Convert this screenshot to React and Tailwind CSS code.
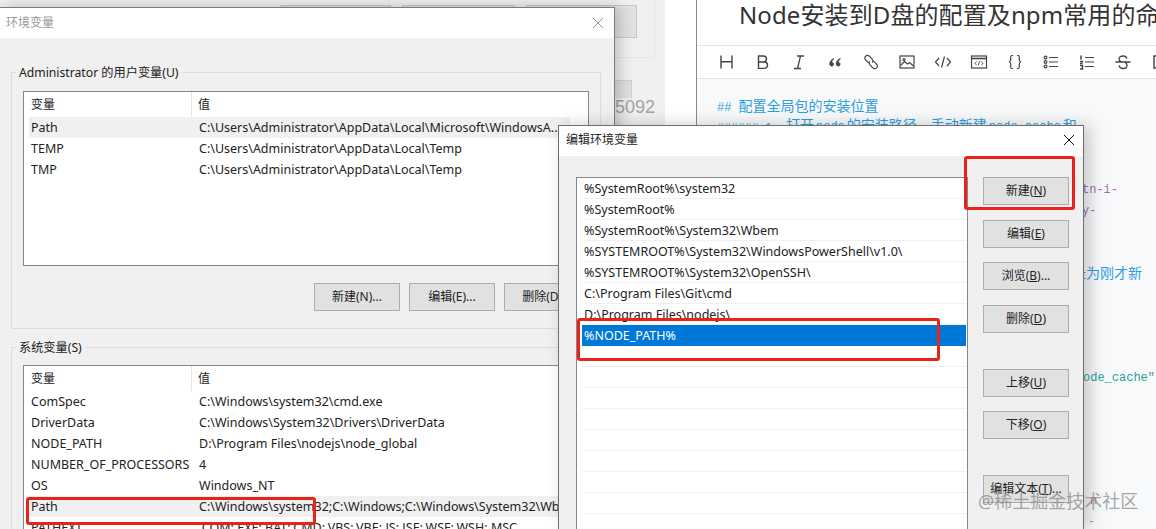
import React from "react";

const uiFont = "font-['Noto_Sans','Noto_Sans_CJK_SC',sans-serif]";

const userVars = [
  ["Path", "C:\\Users\\Administrator\\AppData\\Local\\Microsoft\\WindowsA...", true],
  ["TEMP", "C:\\Users\\Administrator\\AppData\\Local\\Temp"],
  ["TMP", "C:\\Users\\Administrator\\AppData\\Local\\Temp"],
];

const systemVars = [
  ["ComSpec", "C:\\Windows\\system32\\cmd.exe"],
  ["DriverData", "C:\\Windows\\System32\\Drivers\\DriverData"],
  ["NODE_PATH", "D:\\Program Files\\nodejs\\node_global"],
  ["NUMBER_OF_PROCESSORS", "4"],
  ["OS", "Windows_NT"],
  ["Path", "C:\\Windows\\system32;C:\\Windows;C:\\Windows\\System32\\Wb.", true],
  ["PATHEXT", ".COM;.EXE;.BAT;.CMD;.VBS;.VBE;.JS;.JSE;.WSF;.WSH;.MSC"],
];

const pathRows = [
  "%SystemRoot%\\system32",
  "%SystemRoot%",
  "%SystemRoot%\\System32\\Wbem",
  "%SYSTEMROOT%\\System32\\WindowsPowerShell\\v1.0\\",
  "%SYSTEMROOT%\\System32\\OpenSSH\\",
  "C:\\Program Files\\Git\\cmd",
  "D:\\Program Files\\nodejs\\",
  "%NODE_PATH%",
  "", "", "", "", "", "", "", "", "",
];

function Icon({ children }) {
  return (
    <svg width="18" height="18" viewBox="0 0 18 18" fill="none" stroke="#444" strokeWidth="1.2" className="block">
      {children}
    </svg>
  );
}

const toolbar = [
  <Icon><path d="M3 2.500v13M14 2.500v13M3 8.800h11" strokeWidth="1.400" /></Icon>,
  <Icon><path d="M4.500 3h5a3 3 0 0 1 0 6h-5zM4.500 9h5.800a3.200 3.200 0 0 1 0 6.400H4.500z" strokeWidth="1.400" /></Icon>,
  <Icon><path d="M7 3h7M4 15.500h7M10.500 3L7.500 15.500" strokeWidth="1.300" /></Icon>,
  <Icon><path d="M8 5.500C5.500 6.500 3.800 8.500 3.800 10.800c0 1.400.8 2.200 1.900 2.200s1.800-.8 1.800-1.800-.8-1.700-1.800-1.700M14.500 5.500C12 6.500 10.300 8.500 10.300 10.800c0 1.400.8 2.200 1.900 2.200s1.800-.8 1.800-1.800-.8-1.700-1.800-1.700" fill="#444" strokeWidth="1" /></Icon>,
  <Icon><path d="M3.600 3.200a2.600 2.600 0 0 1 3.700 0l3 3a2.600 2.600 0 0 1 0 3.400M14.600 14.800a2.600 2.600 0 0 1-3.700 0l-3-3a2.600 2.600 0 0 1 0-3.400M3.600 3.200a2.600 2.600 0 0 0 0 3.700l3 3M14.600 14.800a2.600 2.600 0 0 0 0-3.700l-3-3" /></Icon>,
  <Icon><rect x="2" y="3" width="14" height="12" /><path d="M2.500 12.500l4-4 3 2.500 2-1.500 4 3.500" /><circle cx="6" cy="6.500" r="1" /></Icon>,
  <Icon><path d="M5 5L1.500 9 5 13M13 5l3.500 4-3.500 4M10.500 3.500L7.500 14.500" /></Icon>,
  <Icon><rect x="1.500" y="3" width="15" height="12" /><path d="M1.500 5.500h15" strokeWidth="1.600" /><path d="M6.500 8.500L5 10.300l1.500 1.700M11.500 8.500l1.500 1.800-1.500 1.700M9.800 8l-1.600 4.500" strokeWidth=".9" /></Icon>,
  <Icon><path d="M7 2.500H6c-1 0-1.300.6-1.300 1.500v3c0 1-.5 1.700-1.700 2 1.200.3 1.700 1 1.700 2v3c0 .9.3 1.500 1.300 1.500h1M11 2.500h1c1 0 1.300.6 1.300 1.500v3c0 1 .5 1.700 1.700 2-1.200.3-1.700 1-1.700 2v3c0 .9-.3 1.500-1.300 1.500h-1" /></Icon>,
  <Icon><circle cx="3.500" cy="4.500" r="1.400" /><circle cx="3.500" cy="9" r="1.400" /><circle cx="3.500" cy="13.500" r="1.400" /><path d="M7 4.500h9M7 9h9M7 13.500h9" /></Icon>,
  <Icon><path d="M3 2.500v4M2 10.500h2.500M2 8.500h2.500v1M2 12.500h2.500v3.500H2" strokeWidth="1.500" /><path d="M7 4.500h9M7 9h9M7 13.500h9" /></Icon>,
  <Icon><path d="M1.500 9h15M13 5.500C12.500 3.800 11 3 9 3 6.700 3 5 4.200 5 6c0 1.300.8 2.300 2.500 3M5 12.500C5.500 14.300 7 15.500 9 15.500c2.300 0 4-1.200 4-3 0-1.400-.7-2.500-2-3.500" strokeWidth="1.300" /></Icon>,
  <Icon><path d="M8 3H4v12h4" strokeWidth="1.400" /></Icon>,
];

function ListView({ rows }) {
  return (
    <div className="h-full w-[566px] overflow-hidden border border-[#828790] bg-white text-[12.5px] text-[#222]">
      <div className="flex h-[25px]">
        <div className="w-[168px] border-r border-[#e5e5e5] pl-[7px] text-[12px] leading-[26px]">变量</div>
        <div className="pl-[6px] text-[12px] leading-[26px]">值</div>
      </div>
      {rows.map(([name, value, active]) => (
        <div key={name} className={`ml-[5px] flex h-[21px] w-[541px] leading-[21px] ${active ? "bg-[#f0f0f0]" : ""}`}>
          <div className="w-[170px] shrink-0 pl-[2px]">{name}</div>
          <div className="whitespace-nowrap">{value}</div>
        </div>
      ))}
    </div>
  );
}

function WinButton({ className = "", children }) {
  return (
    <div className={`flex h-[28px] w-[86px] shrink-0 items-center justify-center border border-[#adadad] bg-[#e1e1e1] text-[12px] text-[#222] ${className}`}>
      {children}
    </div>
  );
}

function GroupBox({ label, className, children }) {
  return (
    <div className={`relative ml-[11px] w-[590px] border border-[#dcdcdc] ${className}`}>
      <span className="absolute left-[4px] top-[-8px] bg-[#f0f0f0] px-[3px] text-[12.2px] leading-[16px] text-[#222]">{label}</span>
      {children}
    </div>
  );
}

function CloseIcon({ color }) {
  return (
    <svg width="12" height="12" viewBox="0 0 12 12" stroke={color} strokeWidth="1" className="block">
      <path d="M1 1l10 10M11 1L1 11" />
    </svg>
  );
}

function Editor() {
  return (
    <div className="absolute bottom-0 left-[696px] right-0 top-0 overflow-hidden border-l border-[#8a8a8a] bg-[#f8f9fb]">
      <div className="h-[45px] overflow-hidden whitespace-nowrap bg-white pl-[42px] text-[24px] leading-[29px] tracking-[0.1px] text-[#333]">
        Node安装到D盘的配置及npm常用的命
      </div>
      <div className="flex h-[34px] items-center gap-[18px] overflow-hidden border-y border-[#e3e3e3] bg-white pl-[21px]">
        {toolbar.map((icon, i) => (
          <div key={i} className="shrink-0">{icon}</div>
        ))}
      </div>
      <div className="whitespace-nowrap pl-[20px] pt-[17px] text-[14px] leading-[20px] text-[#2c9fdc]">
        <div><span className="font-['Liberation_Mono'] text-[12px]">## </span>配置全局包的安装位置</div>
        <div className="-mt-[3px]">
          <span className="font-['Liberation_Mono'] text-[11.5px]">###### 1. </span>打开
          <span className="px-[2px] font-['Liberation_Mono'] text-[12px]">node</span>的安装路径，手动新建
          <span className="px-[2px] font-['Liberation_Mono'] text-[12px]">node_cache</span>和
        </div>
      </div>
      <div className="whitespace-nowrap pl-[385px] font-['Liberation_Mono'] text-[12px] leading-[21px]">
        <div className="mt-[43px] text-[#a46ab8]">tn-i-</div>
        <div className="text-[#a46ab8]">y-</div>
        <div className="-ml-[10px] mt-[40px] font-['Noto_Sans_CJK_SC'] text-[14px] text-[#2c9fdc]">址为刚才新</div>
        <div className="ml-[1px] mt-[85px] text-[#27a39a]">ode_cache"</div>
        <div className="mt-[102px] pl-[8px] text-[#d07a8c]">n</div>
        <div className="pl-[6px] text-[#d07a8c]">-</div>
      </div>
    </div>
  );
}

function BackWindow() {
  return (
    <div className="absolute bottom-0 left-0 top-0 w-[665px] bg-[#f0f0f0]">
      <div className="ml-[280px] flex w-[375px] gap-[11px] border-b border-r border-[#e6e6e6] pb-[19px] pt-[5px]">
        <div className="h-[33px] w-[111px] border border-[#c8c8c8] bg-[#e1e1e1]" />
        <div className="h-[33px] w-[113px] border border-[#c8c8c8] bg-[#e1e1e1]" />
        <div className="h-[33px] w-[111px] border border-[#c8c8c8] bg-[#e1e1e1]" />
      </div>
      <div className="ml-[600px] mt-[22px] h-[18px] w-[32px] border-x border-t border-[#d0d0d0] bg-[#e1e1e1]" />
      <div className="ml-[615px] font-['Liberation_Sans'] text-[18px] leading-[18px] text-[#a3a3a3]">5092</div>
    </div>
  );
}

function EnvDialog() {
  return (
    <div className="absolute bottom-0 left-0 top-[7px] w-[615px] overflow-hidden border-r border-t border-[#7d7d7d] bg-[#f0f0f0] shadow-[4px_0_14px_rgba(0,0,0,0.22)]">
      <div className="flex h-[30px] items-center justify-between bg-white pl-[6px] pr-[10px]">
        <span className="text-[12px] text-[#9a9a9a]">环境变量</span>
        <CloseIcon color="#9a9a9a" />
      </div>
      <GroupBox label="Administrator 的用户变量(U)" className="mt-[34px] h-[257px] pt-[18px]">
        <div className="ml-[11px] h-[175px]">
          <ListView rows={userVars} />
        </div>
        <div className="ml-[302px] mt-[17px] flex gap-[9px]">
          <WinButton>新建(N)...</WinButton>
          <WinButton>编辑(E)...</WinButton>
          <WinButton>删除(D)...</WinButton>
        </div>
      </GroupBox>
      <GroupBox label="系统变量(S)" className="mt-[18px] h-[200px] pt-[17px]">
        <div className="ml-[11px] h-[170px]">
          <ListView rows={systemVars} />
        </div>
      </GroupBox>
    </div>
  );
}

function EditDialog() {
  return (
    <div className="absolute bottom-0 left-[558px] top-[125px] w-[526px] overflow-hidden border-x border-t border-[#6f6f6f] bg-[#f0f0f0] shadow-[6px_0_16px_rgba(0,0,0,0.2)]">
      <div className="flex h-[30px] items-center justify-between bg-white pb-[3px] pl-[7px] pr-[8px]">
        <span className="text-[12px] text-[#222]">编辑环境变量</span>
        <CloseIcon color="#111" />
      </div>
      <div className="flex pl-[17px] pt-[21px]">
        <div className="h-[400px] w-[392px] shrink-0 border border-[#828790] bg-white pl-[5px] pr-[1px] text-[12.5px] text-[#222]">
          {pathRows.map((row, i) => (
            <div
              key={i}
              className={`h-[21px] pl-[2px] leading-[21px] ${row === "%NODE_PATH%" ? "bg-[#0078d7] text-white" : "border-b border-[#f0f0f0]"}`}
            >
              {row}
            </div>
          ))}
        </div>
        <div className="ml-[15px] flex flex-col">
          <WinButton><span>新建(<u>N</u>)</span></WinButton>
          <WinButton className="mt-[15px]"><span>编辑(<u>E</u>)</span></WinButton>
          <WinButton className="mt-[14px]"><span>浏览(<u>B</u>)...</span></WinButton>
          <WinButton className="mt-[15px]"><span>删除(<u>D</u>)</span></WinButton>
          <WinButton className="mt-[36px]"><span>上移(<u>U</u>)</span></WinButton>
          <WinButton className="mt-[14px]"><span>下移(<u>O</u>)</span></WinButton>
          <WinButton className="mt-[36px]"><span>编辑文本(<u>T</u>)...</span></WinButton>
        </div>
      </div>
    </div>
  );
}

export default function App() {
  return (
    <div className={`relative h-[529px] w-[1156px] overflow-hidden bg-white ${uiFont}`}>
      <BackWindow />
      <Editor />
      <EnvDialog />
      <EditDialog />

      {/* red annotation boxes */}
      <div className="absolute left-[26px] top-[497px] h-[28px] w-[290px] rounded-[3px] border-[3px] border-[#e8231a]" />
      <div className="absolute left-[964px] top-[156px] h-[54px] w-[111px] rounded-[3px] border-[3px] border-[#e8231a]" />
      <div className="absolute left-[577px] top-[318px] h-[43px] w-[363px] rounded-[3px] border-[3px] border-[#e8231a]" />

      {/* watermark */}
      <div className="absolute left-[978px] top-[488px] text-[18px] leading-[26px] text-[#8f8f8f]/80">@稀土掘金技术社区</div>
    </div>
  );
}
